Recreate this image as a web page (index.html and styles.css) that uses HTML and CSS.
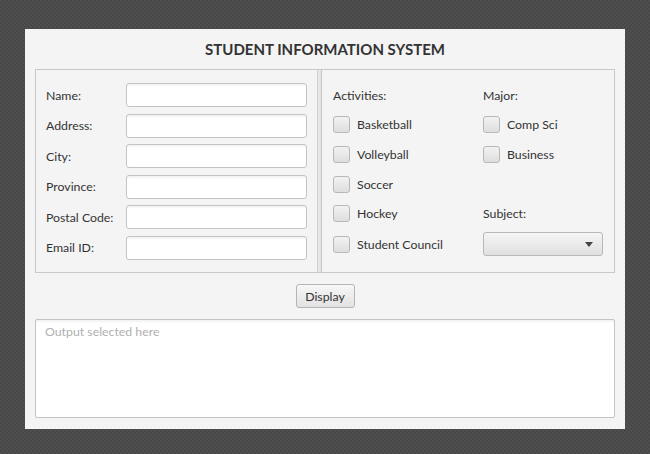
FILE: index.html
```html
<!DOCTYPE html>
<html>
<head>
<meta charset="utf-8">
<link rel="stylesheet" href="styles.css">
</head>
<body>
<div class="window">
  <h1 class="title">STUDENT INFORMATION SYSTEM</h1>
  <div class="panels">
    <div class="left">
      <label class="lbl">Name:</label><div class="field"></div>
      <label class="lbl">Address:</label><div class="field"></div>
      <label class="lbl">City:</label><div class="field"></div>
      <label class="lbl">Province:</label><div class="field"></div>
      <label class="lbl">Postal Code:</label><div class="field"></div>
      <label class="lbl">Email ID:</label><div class="field"></div>
    </div>
    <div class="divider"></div>
    <div class="right">
      <div class="lbl">Activities:</div>
      <div class="lbl">Major:</div>
      <div class="check"><span class="box"></span>Basketball</div>
      <div class="check"><span class="box"></span>Comp Sci</div>
      <div class="check"><span class="box"></span>Volleyball</div>
      <div class="check"><span class="box"></span>Business</div>
      <div class="check"><span class="box"></span>Soccer</div>
      <div></div>
      <div class="check"><span class="box"></span>Hockey</div>
      <div class="lbl">Subject:</div>
      <div class="check"><span class="box"></span>Student Council</div>
      <div class="combo"><span class="arrow"></span></div>
    </div>
  </div>
  <div class="btnrow"><button class="btn">Display</button></div>
  <div class="output"><span class="placeholder">Output selected here</span></div>
</div>
</body>
</html>
```
FILE: styles.css
```css
html, body {
  margin: 0;
  padding: 0;
}
body {
  width: 650px;
  height: 454px;
  background-color: #4a4a4a;
  background-image: repeating-conic-gradient(#474747 0 25%, #4f4f4f 0 50%);
  background-size: 4px 4px;
  padding: 29px 0 0 25px;
  box-sizing: border-box;
  font-family: "Lato", "Liberation Sans", sans-serif;
  font-size: 12.3px;
  color: #333;
}
.window {
  width: 600px;
  height: 400px;
  background: #f4f4f4;
  box-sizing: border-box;
  padding: 0 10px 11px 10px;
  display: flex;
  flex-direction: column;
}
.title {
  margin: 0;
  height: 40px;
  line-height: 40px;
  text-align: center;
  font-size: 15px;
  font-weight: bold;
  color: #333;
}
.panels {
  height: 204px;
  box-sizing: border-box;
  border: 1px solid #c8c8c8;
  display: flex;
}
.left {
  width: 281px;
  box-sizing: border-box;
  padding: 13px 0 0 10px;
  display: grid;
  grid-template-columns: 80px 181px;
  grid-auto-rows: 24px;
  row-gap: 6.6px;
  align-content: start;
  align-items: center;
}
.lbl {
  color: #333;
}
.field {
  height: 24px;
  box-sizing: border-box;
  border: 1px solid #c4c4c4;
  border-radius: 3px;
  background: linear-gradient(#f0f0f0 0, #fff 3px);
}
.divider {
  width: 5px;
  box-sizing: border-box;
  border-left: 1px solid #cfcfcf;
  border-right: 1px solid #c8c8c8;
  background: linear-gradient(90deg, #ececec, #e0e0e0);
}
.right {
  flex: 1;
  padding: 10px 0 0 11px;
  display: grid;
  grid-template-columns: 150px 1fr;
  grid-template-rows: 30px 29px 30px 30px 29px 32px;
  align-content: start;
  align-items: center;
}
.check {
  display: flex;
  align-items: center;
  gap: 7px;
}
.box {
  width: 17px;
  height: 17px;
  box-sizing: border-box;
  border: 1px solid #b8b8b8;
  border-radius: 3px;
  background: linear-gradient(#f2f2f2, #dedede);
}
.combo {
  width: 120px;
  height: 24px;
  box-sizing: border-box;
  border: 1px solid #b8b8b8;
  border-radius: 3px;
  background: linear-gradient(#f5f5f5, #e0e0e0);
  display: flex;
  align-items: center;
  justify-content: flex-end;
  padding-right: 9px;
}
.arrow {
  width: 0;
  height: 0;
  border-left: 4.5px solid transparent;
  border-right: 4.5px solid transparent;
  border-top: 5px solid #444;
}
.btnrow {
  height: 46px;
  display: flex;
  align-items: center;
  justify-content: center;
}
.btn {
  width: 59px;
  height: 24px;
  box-sizing: border-box;
  border: 1px solid #b5b5b5;
  border-radius: 3px;
  background: linear-gradient(#f7f7f7, #e2e2e2);
  font-family: inherit;
  font-size: 12.3px;
  color: #333;
  padding: 0;
}
.output {
  flex: 1;
  box-sizing: border-box;
  border: 1px solid #c4c4c4;
  border-radius: 2px;
  background: linear-gradient(#f0f0f0 0, #fff 3px);
  padding: 4px 9px;
}
.placeholder {
  color: #b0b0b0;
}
```
